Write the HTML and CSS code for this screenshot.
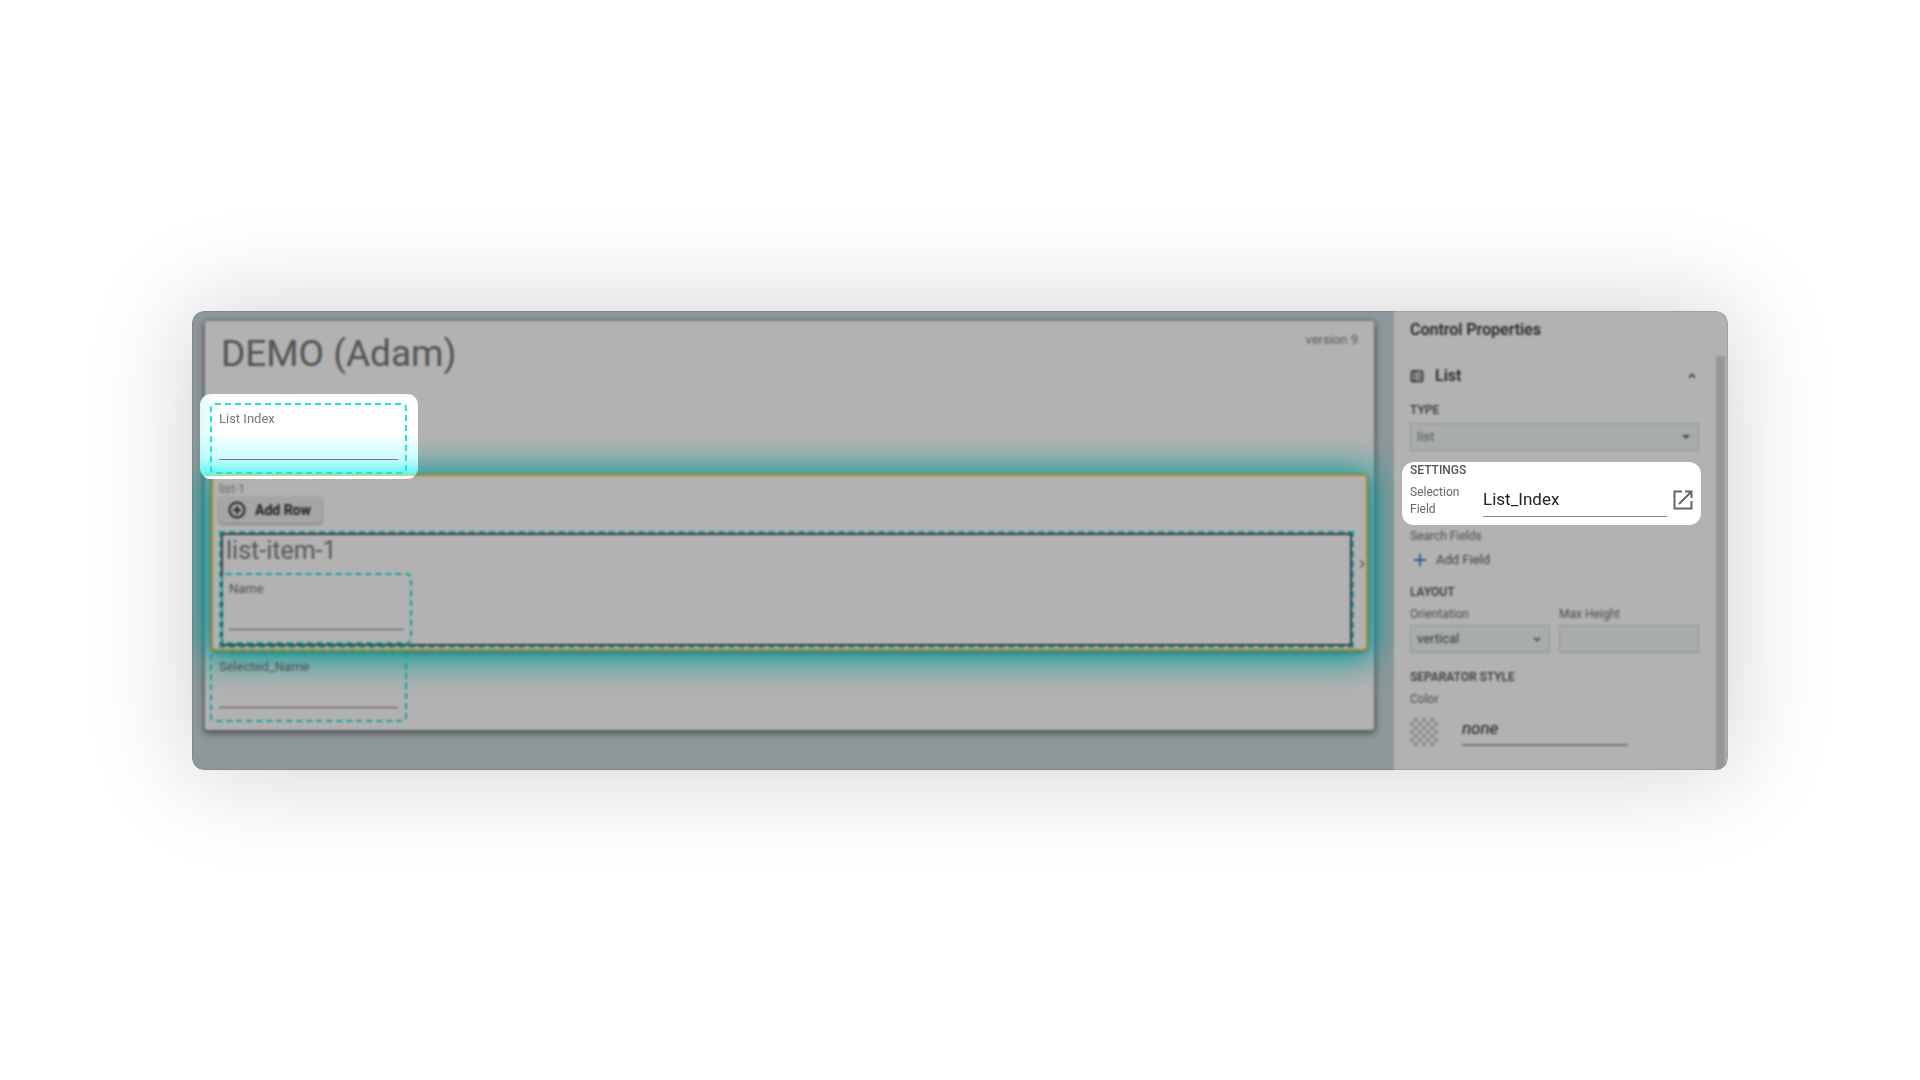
FILE: index.html
```html
<!DOCTYPE html>
<html lang="en">
<head>
<meta charset="utf-8">
<meta name="viewport" content="width=device-width, initial-scale=1">
<title>Form designer</title>
<link rel="stylesheet" href="styles.css">
</head>
<body>
<main class="designer">
  <section class="canvas">
    <div class="form-card">
      <header class="form-header">
        <h1 class="form-title">DEMO (Adam)</h1>
        <span class="version">version 9</span>
      </header>
      <div class="spotlight-field">
        <div class="field">
          <label for="list-index">List Index</label>
          <input id="list-index" type="text">
        </div>
      </div>
      <section class="list">
        <div class="list-label">list-1</div>
        <button class="add-row" type="button">
          <svg width="18" height="18" viewBox="0 0 18 18" fill="none" stroke="currentColor" stroke-width="2"><circle cx="9" cy="9" r="7.5"/><path d="M9 5v8M5 9h8"/></svg>
          Add Row
        </button>
        <div class="item-row">
          <div class="item-outline">
            <div class="item">
              <h2 class="item-title">list-item-1</h2>
              <div class="field item-field">
                <label for="name">Name</label>
                <input id="name" type="text">
              </div>
            </div>
          </div>
          <svg class="handle" width="8" height="10" viewBox="0 0 8 10" fill="none" stroke="currentColor" stroke-width="1.3"><path d="M2 1.5L6 5L2 8.5"/></svg>
        </div>
      </section>
      <div class="field">
        <label for="selected-name">Selected_Name</label>
        <input id="selected-name" type="text">
      </div>
    </div>
  </section>

  <aside class="panel">
    <div class="panel-body">
      <h2 class="panel-title">Control Properties</h2>
      <div class="group-head">
        <svg width="14" height="14" viewBox="0 0 14 14" fill="none" stroke="currentColor"><rect x="1.5" y="2" width="11" height="10.5" rx="1" stroke-width="1.6"/><path d="M4.5 2v10.5" stroke-width="1.2"/><path d="M6.500 5h4.500M6.500 7.3h4.500M6.500 9.6h4.500" stroke-width="0.9"/></svg>
        <h3>List</h3>
        <button class="icon-button" type="button" aria-label="Collapse"><svg width="10" height="10" viewBox="0 0 10 10" fill="none" stroke="currentColor" stroke-width="1.8"><path d="M2 6.5L5 3.5L8 6.5"/></svg></button>
      </div>
      <label class="caption type-caption" for="type">TYPE</label>
      <div class="select-wrap">
        <select id="type" class="box muted"><option>list</option></select>
        <svg class="caret" width="10" height="10" viewBox="0 0 10 10"><path d="M1 3h8L5 7z" fill="currentColor"/></svg>
      </div>
      <div class="spotlight-settings">
        <h4 class="caption">SETTINGS</h4>
        <div class="selection">
          <label for="selection-field">Selection Field</label>
          <input id="selection-field" type="text" value="List_Index">
          <button class="icon-button open" type="button" aria-label="Open field"><svg width="20" height="20" viewBox="0 0 20 20" fill="none" stroke="currentColor" stroke-width="2"><path d="M9 1.5H1.5V18.5H18.5V11"/><path d="M12 1.5H18.5V8M18 2L6 14"/></svg></button>
        </div>
      </div>
      <div class="sub-label">Search Fields</div>
      <button class="add-field" type="button">
        <svg width="14" height="14" viewBox="0 0 14 14" fill="none" stroke="#3f82d8" stroke-width="2"><path d="M7 1v12M1 7h12"/></svg>
        Add Field
      </button>
      <h4 class="caption layout-caption">LAYOUT</h4>
      <div class="pair">
        <div>
          <label class="sub-label" for="orientation">Orientation</label>
          <div class="select-wrap">
            <select id="orientation" class="box"><option>vertical</option></select>
            <svg class="caret" width="10" height="10" viewBox="0 0 10 10" fill="none" stroke="currentColor" stroke-width="1.6"><path d="M2 3.5L5 6.5L8 3.5"/></svg>
          </div>
        </div>
        <div>
          <label class="sub-label" for="max-height">Max Height</label>
          <input id="max-height" class="box" type="text">
        </div>
      </div>
      <h4 class="caption separator-caption">SEPARATOR STYLE</h4>
      <label class="sub-label" for="color">Color</label>
      <div class="color-row">
        <span class="swatch"></span>
        <input id="color" class="color-input" type="text" value="none">
      </div>
    </div>
    <div class="scroll-thumb"></div>
  </aside>
  <div class="scrim"></div>
</main>
</body>
</html>
```
FILE: styles.css
```css
* {
  box-sizing: border-box;
}

body {
  margin: 0;
  min-height: 100vh;
  display: flex;
  align-items: center;
  justify-content: center;
  background: #fff;
  color: #333;
  font-family: Roboto, "Liberation Sans", sans-serif;
  font-size: 12px;
  line-height: 16px;
}

h1, h2, h3, h4 {
  margin: 0;
  font-weight: 500;
}

input, select, button {
  margin: 0;
  padding: 0;
  border: 0;
  border-radius: 0;
  background: none;
  color: inherit;
  font: inherit;
}

svg {
  display: block;
  flex: none;
}

.designer {
  position: relative;
  isolation: isolate;
  overflow: hidden;
  width: 80%;
  display: flex;
  border-radius: 12px;
  background: #ccd8dc;
  box-shadow: 0 0 100px 4px rgba(0, 0, 0, 0.18);
}

/* Dims everything that is not part of the current tour step */
.scrim {
  position: absolute;
  inset: 0;
  z-index: 1;
  border-radius: 12px;
  background: rgba(0, 0, 0, 0.3);
  box-shadow: inset 0 0 1px 1px rgba(0, 0, 0, 0.1);
  backdrop-filter: blur(1px);
  pointer-events: none;
}

.canvas {
  flex: 1;
  min-width: 0;
  padding: 10px 20px 39px 13px;
}

.form-card {
  display: flex;
  flex-direction: column;
  padding: 9px 5px 8px;
  border-radius: 3px;
  background: #fff;
  box-shadow: 0 2px 6px 1px rgba(0, 0, 0, 0.5);
}

.form-header {
  display: flex;
  justify-content: space-between;
  padding: 0 11px 25px;
}

.form-title {
  color: #777;
  font-size: 37px;
  font-weight: 400;
  line-height: 48px;
}

.version {
  padding-top: 2px;
  color: #888;
  font-size: 13px;
}

.field {
  width: 197px;
  padding: 6px 7px 12px;
  border: 2px dashed #1de5da;
  border-radius: 5px;
  color: #777;
  font-size: 13px;
}

.field label,
.field input {
  display: block;
}

.field input {
  width: 100%;
  height: 33px;
  border-bottom: 1px solid #777;
}

.spotlight-field {
  position: relative;
  z-index: 2;
  align-self: flex-start;
  margin: -9px 0 -5px -10px;
  padding: 9px 11px 5px 10px;
  border-radius: 11px;
  background:
    linear-gradient(#ffc640, #ffc640) 12px calc(100% - 3px) / 100% 1px no-repeat,
    linear-gradient(#fff, #fff) 0 100% / 100% 3px no-repeat,
    linear-gradient(to right, rgba(120, 240, 240, 0.25), rgba(120, 240, 240, 0) 8%),
    linear-gradient(to bottom, rgba(255, 255, 255, 0) 45%, rgba(150, 250, 250, 0.5) 76%, #50f3f0 97%),
    #fff;
}

.list {
  margin: 0 1px;
  padding: 5px 0 1px 6px;
  border: 2px solid #f3c33b;
  border-radius: 5px;
  background: #fff;
  box-shadow: 0 2px 5px rgba(0, 0, 0, 0.25), 0 2px 32px 8px rgba(0, 222, 220, 0.95);
}

.list-label {
  color: #999;
}

.add-row {
  display: flex;
  align-items: center;
  gap: 9px;
  height: 26px;
  margin-bottom: 8px;
  padding: 0 11px 0 9px;
  border-radius: 3px;
  background: #ececec;
  box-shadow: 0 1px 3px rgba(0, 0, 0, 0.4);
  color: #333;
  font-size: 14px;
  font-weight: 700;
}

.item-row {
  display: flex;
  color: #777;
}

.item-outline {
  flex: 1;
  border: 2px dashed #1de5da;
}

.item {
  border: 2px solid #555;
}

.item-title {
  margin-bottom: 6px;
  padding-left: 3px;
  color: #808080;
  font-size: 25px;
  font-weight: 400;
  line-height: 32px;
}

.item-field {
  width: 191px;
  margin-left: -2px;
  padding-inline: 6px;
}

.handle {
  margin: 28px 0 0 4px;
}

.panel {
  display: flex;
  flex: none;
  width: 334px;
  padding-right: 3px;
  background: #fff;
}

.panel-body {
  flex: 1;
  min-width: 0;
  display: flex;
  flex-direction: column;
  padding: 9px 17px 24px 16px;
}

.scroll-thumb {
  flex: none;
  width: 9px;
  margin-top: 45px;
  background: #d8d8d8;
}

.panel-title {
  margin-bottom: 26px;
  font-size: 16px;
  line-height: 20px;
}

.group-head {
  display: flex;
  align-items: center;
  height: 20px;
  margin-bottom: 16px;
  padding-right: 2px;
}

.group-head h3 {
  flex: 1;
  margin-left: 11px;
  font-size: 16px;
}

.caption {
  color: #555;
  font-weight: 500;
}

.type-caption {
  margin-bottom: 5px;
}

.select-wrap {
  display: flex;
  align-items: center;
}

.box {
  width: 100%;
  height: 28px;
  padding: 0 6px;
  appearance: none;
  border: 1px solid #ced8dd;
  background: #f3f7f8;
  color: #555;
  font-size: 13px;
}

.muted {
  color: #7d8a8a;
}

.caret {
  margin-left: -18px;
  color: #666;
}

.spotlight-settings {
  position: relative;
  z-index: 2;
  margin: 11px -2px 3px -8px;
  padding: 0 8px 7px;
  border-radius: 12px;
  background: #fff;
}

.selection {
  display: flex;
  align-items: flex-start;
  margin-top: 6px;
  color: #666;
  line-height: 17px;
}

.selection label {
  width: 73px;
  padding-right: 16px;
}

.selection input {
  flex: 1;
  min-width: 0;
  height: 33px;
  padding-bottom: 2px;
  border-bottom: 1px solid #888;
  color: #222;
  font-size: 17px;
}

.open {
  margin: 6px 0 0 6px;
}

.icon-button {
  color: #666;
}

.sub-label {
  display: block;
  color: #777;
}

.add-field {
  display: flex;
  align-items: center;
  align-self: flex-start;
  gap: 9px;
  height: 20px;
  margin: 6px 0 14px 3px;
  color: #666;
  font-size: 13px;
}

.layout-caption {
  margin-bottom: 6px;
}

.pair {
  display: grid;
  grid-template-columns: 1fr 1fr;
  gap: 9px;
}

.pair .sub-label {
  margin-bottom: 3px;
}

.separator-caption {
  margin: 16px 0 6px;
}

.color-row {
  display: flex;
  align-items: flex-start;
  gap: 24px;
  margin-top: 11px;
}

.swatch {
  width: 28px;
  height: 28px;
  border-radius: 5px;
  background: repeating-conic-gradient(#ccc 0 25%, #fff 0 50%) 0 0 / 8px 8px;
}

.color-input {
  width: 166px;
  height: 28px;
  padding-bottom: 6px;
  border-bottom: 2px solid #aaa;
  font-size: 17px;
  font-style: italic;
}
```
